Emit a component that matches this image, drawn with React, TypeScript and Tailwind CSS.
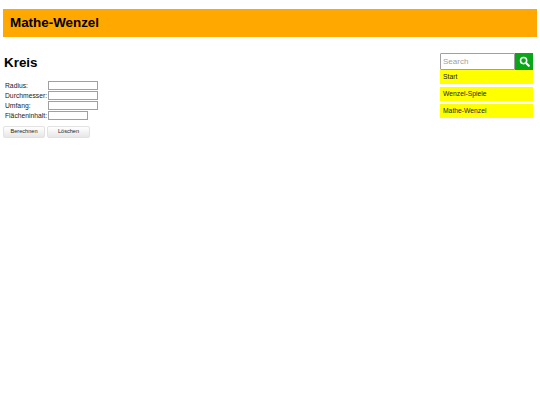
const rows: [string, string][] = [
  ["Radius:", "w-[50px]"],
  ["Durchmesser:", "w-[50px]"],
  ["Umfang:", "w-[50px]"],
  ["Flächeninhalt:", "w-[40px]"],
];

export default function App() {
  return (
    <div className="min-h-[405px] bg-white px-[3px] pt-[9px] font-['Liberation_Sans',sans-serif] text-black">
      <header className="flex h-[28px] items-center bg-[#ffa800] pl-[7px]">
        <span className="text-[13.4px] font-bold leading-none">Mathe-Wenzel</span>
      </header>
      <div className="flex justify-between pt-[16px]">
        <main>
          <h1 className="mt-px pl-px text-[13.4px] font-bold leading-[18px]">Kreis</h1>
          <div className="mt-[9px] flex flex-col gap-[1px]">
            {rows.map(([label, w]) => (
              <div key={label} className="flex h-[9px] items-center">
                <span className="w-[45px] pl-[2px] pt-[1px] text-[6.75px] leading-none text-[#222]">{label}</span>
                <span className={`h-[9px] border border-[#a0a0a0] bg-white ${w}`} />
              </div>
            ))}
          </div>
          <div className="mt-[6px] flex gap-[2px]">
            <button className="h-[12px] w-[42px] rounded-[2px] border border-[#e2e2e2] bg-gradient-to-b from-white to-[#e6e6e6] text-[5.6px] leading-none text-[#222]">Berechnen</button>
            <button className="h-[12px] w-[43px] rounded-[2px] border border-[#e2e2e2] bg-gradient-to-b from-white to-[#e6e6e6] text-[5.6px] leading-none text-[#222]">Löschen</button>
          </div>
        </main>
        <aside className="mr-[4px] w-[93px]">
          <div className="flex h-[17px]">
            <div className="flex-1 rounded-l-[1px] border border-[#a0a0a0] bg-white pl-[2px] text-[8px] leading-[15px] text-[#a0a0a0]">Search</div>
            <div className="flex w-[18px] items-center justify-center bg-[#0aa61a]">
              <svg width="11" height="11" viewBox="0 0 11 11" fill="none" stroke="white">
                <circle cx="4.6" cy="4.6" r="3.1" strokeWidth="1.5" />
                <path d="M7 7 L9.8 9.8" strokeWidth="2.1" strokeLinecap="round" />
              </svg>
            </div>
          </div>
          <nav className="flex flex-col gap-[3px]">
            {["Start", "Wenzel-Spiele", "Mathe-Wenzel"].map((t) => (
              <div key={t} className="flex h-[14px] items-center bg-[#ffff00] pl-[3px] text-[6.75px] leading-none text-[#222]">{t}</div>
            ))}
          </nav>
        </aside>
      </div>
    </div>
  );
}
